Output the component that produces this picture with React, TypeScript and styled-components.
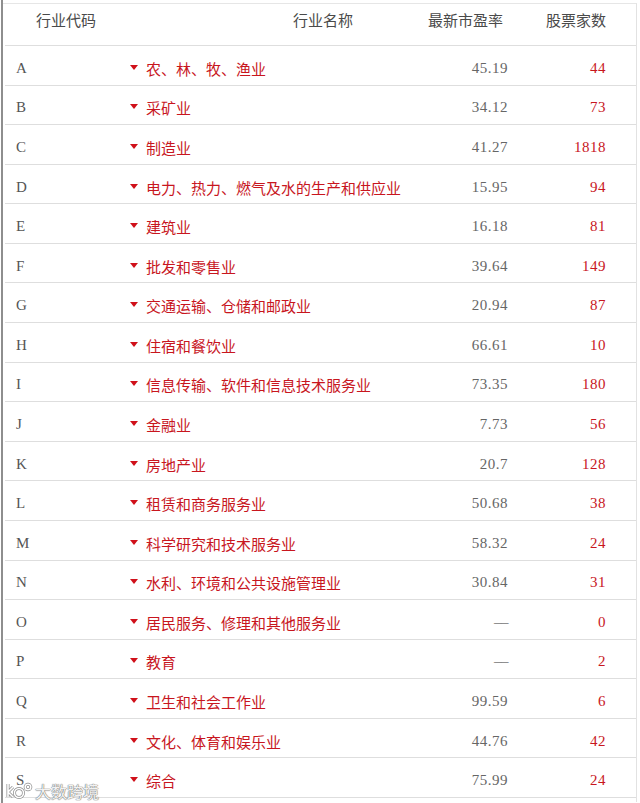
import React from 'react';
import styled, { createGlobalStyle } from 'styled-components';

const GlobalStyle = createGlobalStyle`
  html, body {
    margin: 0;
    padding: 0;
    background: #fff;
  }
  body {
    font-family: "Noto Sans CJK SC", "Noto Sans", sans-serif;
  }
`;

const Page = styled.div`
  position: relative;
  width: 640px;
  height: 803px;
  display: flex;
  overflow: hidden;
`;

const LeftRule = styled.div`
  width: 2px;
  margin-left: 1px;
  height: 100%;
  background: #8e8e8e;
`;

const Table = styled.div`
  margin-top: 3px;
  width: 634px;
  border-top: 1px solid #e6e6e6;
  border-right: 1px solid #e2e2e2;
  height: 799px;
  box-sizing: border-box;
`;

const Row = styled.div<{ $header?: boolean }>`
  display: grid;
  grid-template-columns: 120px 295px 92px 96px 1fr;
  margin-left: 2px;
  height: ${({ $header }) => ($header ? '42px' : '39.58px')};
  box-sizing: border-box;
  border-bottom: 1px solid #dedede;
  align-items: center;
  padding: ${({ $header }) => ($header ? '0 0 10px' : '6px 0 0')};
`;

const HeadCell = styled.div<{ $align?: 'left' | 'right'; $pad: string }>`
  font-size: 15px;
  color: #4a4a4a;
  text-align: ${({ $align }) => $align || 'left'};
  padding: ${({ $pad }) => $pad};
  white-space: nowrap;
`;

const Code = styled.div`
  padding-left: 11px;
  font-family: "Liberation Serif", serif;
  font-size: 15px;
  color: #555;
`;

const Name = styled.div`
  display: flex;
  align-items: center;
  padding-left: 5px;
  font-size: 15px;
  color: #c8161e;
  white-space: nowrap;
`;

const Arrow = styled.span`
  width: 0;
  height: 0;
  border-left: 4.5px solid transparent;
  border-right: 4.5px solid transparent;
  border-top: 5px solid #d0101a;
  margin-right: 8px;
  margin-top: -2px;
`;

const Num = styled.div<{ $red?: boolean; $pad: number }>`
  text-align: right;
  padding-right: ${({ $pad }) => $pad}px;
  font-family: "Liberation Serif", serif;
  font-size: 15px;
  letter-spacing: 0.5px;
  color: ${({ $red }) => ($red ? '#c8161e' : '#666')};
`;

const Dash = styled.span`
  letter-spacing: -0.5px;
  color: #777;
`;

const Watermark = styled.div`
  position: absolute;
  left: 5px;
  top: 779px;
  display: flex;
  align-items: center;
  gap: 2px;
  color: rgba(255, 255, 255, 0.92);
  font-size: 16px;
  text-shadow: 0 0 1px #777, 0 0 1px #777, 0 0 1px #999;
`;

const rows = [
  ['A', '农、林、牧、渔业', '45.19', '44'],
  ['B', '采矿业', '34.12', '73'],
  ['C', '制造业', '41.27', '1818'],
  ['D', '电力、热力、燃气及水的生产和供应业', '15.95', '94'],
  ['E', '建筑业', '16.18', '81'],
  ['F', '批发和零售业', '39.64', '149'],
  ['G', '交通运输、仓储和邮政业', '20.94', '87'],
  ['H', '住宿和餐饮业', '66.61', '10'],
  ['I', '信息传输、软件和信息技术服务业', '73.35', '180'],
  ['J', '金融业', '7.73', '56'],
  ['K', '房地产业', '20.7', '128'],
  ['L', '租赁和商务服务业', '50.68', '38'],
  ['M', '科学研究和技术服务业', '58.32', '24'],
  ['N', '水利、环境和公共设施管理业', '30.84', '31'],
  ['O', '居民服务、修理和其他服务业', '--', '0'],
  ['P', '教育', '--', '2'],
  ['Q', '卫生和社会工作业', '99.59', '6'],
  ['R', '文化、体育和娱乐业', '44.76', '42'],
  ['S', '综合', '75.99', '24'],
];

const App = () => {
  return (
    <Page>
      <GlobalStyle />
      <LeftRule />
      <Table>
        <Row $header>
          <HeadCell $pad="0 0 0 31px">行业代码</HeadCell>
          <HeadCell $pad="0 0 0 168px">行业名称</HeadCell>
          <HeadCell $align="right" $pad="0 9px 0 0">最新市盈率</HeadCell>
          <HeadCell $align="right" $pad="0 2px 0 0">股票家数</HeadCell>
          <div />
        </Row>
        {rows.map(([code, name, pe, count]) => (
          <Row key={code}>
            <Code>{code}</Code>
            <Name>
              <Arrow />
              {name}
            </Name>
            <Num $pad={4}>{pe === '--' ? <Dash>––</Dash> : pe}</Num>
            <Num $red $pad={2}>{count}</Num>
            <div />
          </Row>
        ))}
      </Table>
      <Watermark>
        <svg width="28" height="18" viewBox="0 0 28 18">
          <g fill="none" stroke="#8a8a8a" strokeWidth="3">
            <path d="M3 2 L3 15 M3 10 L8 5 M3 10 L8 15" />
            <circle cx="14" cy="11" r="4.5" />
            <circle cx="23" cy="5" r="2.8" />
          </g>
          <g fill="none" stroke="#fff" strokeWidth="1.6">
            <path d="M3 2 L3 15 M3 10 L8 5 M3 10 L8 15" />
            <circle cx="14" cy="11" r="4.5" />
            <circle cx="23" cy="5" r="2.8" />
          </g>
        </svg>
        <span>大数跨境</span>
      </Watermark>
    </Page>
  );
};

export default App;
